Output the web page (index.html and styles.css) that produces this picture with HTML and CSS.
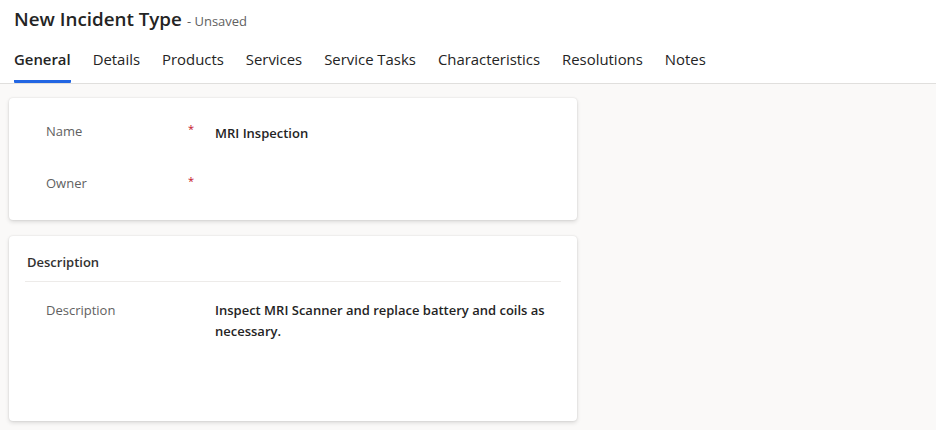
FILE: index.html
```html
<!DOCTYPE html>
<html lang="en">
<head>
<meta charset="utf-8">
<title>New Incident Type</title>
<link rel="stylesheet" href="styles.css">
</head>
<body>
<header class="header">
  <div class="title-row">
    <h1 class="title">New Incident Type</h1>
    <span class="status">- Unsaved</span>
  </div>
  <nav class="tabs">
    <span class="tab active">General</span>
    <span class="tab">Details</span>
    <span class="tab">Products</span>
    <span class="tab">Services</span>
    <span class="tab">Service Tasks</span>
    <span class="tab">Characteristics</span>
    <span class="tab">Resolutions</span>
    <span class="tab">Notes</span>
  </nav>
</header>
<main class="main">
  <section class="card card-general">
    <div class="row">
      <span class="label">Name</span>
      <span class="req">*</span>
      <span class="value">MRI Inspection</span>
    </div>
    <div class="row">
      <span class="label">Owner</span>
      <span class="req">*</span>
      <span class="value"></span>
    </div>
  </section>
  <section class="card card-desc">
    <h2 class="card-title">Description</h2>
    <div class="row row-desc">
      <span class="label">Description</span>
      <span class="req"></span>
      <span class="value">Inspect MRI Scanner and replace battery and coils as necessary.</span>
    </div>
  </section>
</main>
</body>
</html>
```

FILE: styles.css
```css
* { box-sizing: border-box; }

body {
  margin: 0;
  background: #faf9f8;
  font-family: "Open Sans", "Noto Sans", sans-serif;
  color: #242424;
}

.header {
  background: #ffffff;
  border-bottom: 1px solid #e0dfdd;
  padding: 0 14px;
}

.title-row {
  display: flex;
  align-items: baseline;
  gap: 5px;
  padding-top: 6px;
  height: 32px;
}

.title {
  margin: 0;
  font-size: 18.8px;
  font-weight: 600;
  line-height: 26px;
  color: #242424;
}

.status {
  font-size: 13px;
  color: #616161;
}

.tabs {
  display: flex;
  gap: 22px;
}

.tab {
  font-size: 14.9px;
  line-height: 20px;
  padding: 17px 0 11px;
  border-bottom: 3px solid transparent;
  color: #242424;
  white-space: nowrap;
}

.tab.active {
  font-weight: 600;
  border-bottom-color: #2266e3;
  border-radius: 0 0 1px 1px;
}

.main {
  width: 586px;
  padding: 14px 9px;
  display: flex;
  flex-direction: column;
  gap: 16px;
}

.card {
  background: #ffffff;
  border-radius: 4px;
  box-shadow: 0 0 2px rgba(0, 0, 0, 0.12), 0 2px 4px rgba(0, 0, 0, 0.12);
  padding: 9px 16px;
}

.card-desc {
  padding: 0 16px 79px;
}

.card-title {
  margin: 0;
  padding: 16px 2px 9px;
  font-size: 13px;
  font-weight: 600;
  line-height: 20px;
  color: #323130;
  border-bottom: 1px solid #edebe9;
}

.row {
  display: grid;
  grid-template-columns: 142px 27px 1fr;
  height: 52px;
  padding: 14px 0 0 21px;
}

.row-desc {
  height: auto;
  padding-top: 18px;
}

.label {
  font-size: 13px;
  line-height: 20px;
  color: #616161;
}

.req {
  font-size: 11px;
  line-height: 14px;
  color: #c50f1f;
  padding-top: 1px;
}

.value {
  font-size: 13px;
  font-weight: 600;
  line-height: 20px;
  padding-top: 2px;
  color: #242424;
}

.row-desc .value {
  line-height: 21px;
  padding-top: 0;
}
```
